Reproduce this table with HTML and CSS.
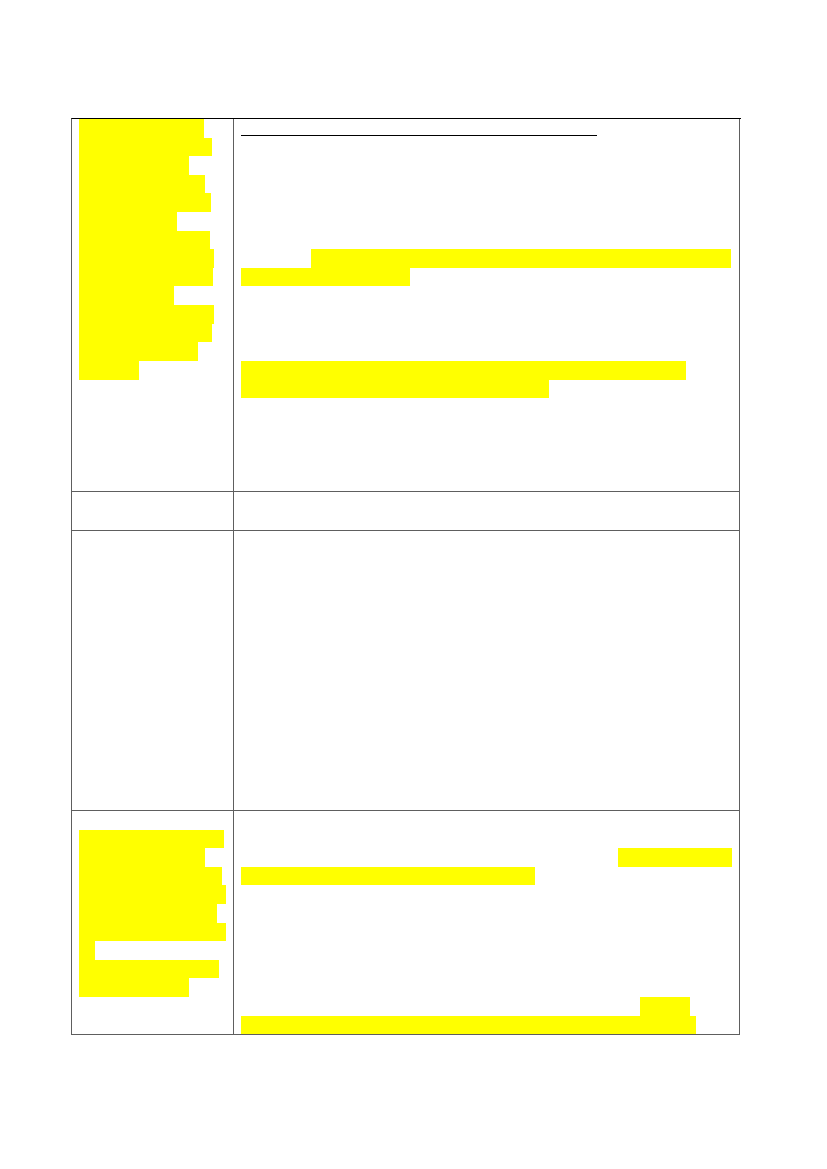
FILE: index.html
```html
<!DOCTYPE html>
<html lang="en">
<head>
<meta charset="utf-8">
<title>Document</title>
<link rel="stylesheet" href="styles.css">
</head>
<body>
<div class="sheet">
  <div class="grid">
    <!-- row 1 -->
    <div class="cell left r1">
      <div class="ln"><span class="hl" style="width:125px"></span></div>
      <div class="ln"><span class="hl" style="width:133px"></span></div>
      <div class="ln"><span class="hl" style="width:110px"></span></div>
      <div class="ln"><span class="hl" style="width:126px"></span></div>
      <div class="ln"><span class="hl" style="width:132px"></span></div>
      <div class="ln"><span class="hl" style="width:98px"></span></div>
      <div class="ln"><span class="hl" style="width:131px"></span></div>
      <div class="ln"><span class="hl" style="width:135px"></span></div>
      <div class="ln"><span class="hl" style="width:134px"></span></div>
      <div class="ln"><span class="hl" style="width:95px"></span></div>
      <div class="ln"><span class="hl" style="width:135px"></span></div>
      <div class="ln"><span class="hl" style="width:133px"></span></div>
      <div class="ln"><span class="hl" style="width:119px"></span></div>
      <div class="ln"><span class="hl" style="width:60px"></span></div>
    </div>
    <div class="cell right r1">
      <div class="ln"><span class="ul" style="width:356px"></span></div>
      <div class="ln"></div>
      <div class="ln"></div>
      <div class="ln"></div>
      <div class="ln"></div>
      <div class="ln"></div>
      <div class="ln"></div>
      <div class="ln"><span class="hl" style="margin-left:70px;width:420px"></span></div>
      <div class="ln"><span class="hl" style="width:169px"></span></div>
      <div class="ln"></div>
      <div class="ln"></div>
      <div class="ln"></div>
      <div class="ln"></div>
      <div class="ln"><span class="hl" style="width:445px"></span></div>
      <div class="ln"><span class="hl" style="width:308px"></span></div>
    </div>

    <!-- row 2 -->
    <div class="cell left r2"></div>
    <div class="cell right r2"></div>

    <!-- row 3 -->
    <div class="cell left r3"></div>
    <div class="cell right r3"></div>

    <!-- row 4 -->
    <div class="cell left r4">
      <div class="ln"></div>
      <div class="ln"><span class="hl" style="width:145px"></span></div>
      <div class="ln"><span class="hl" style="width:126px"></span></div>
      <div class="ln"><span class="hl" style="width:143px"></span></div>
      <div class="ln"><span class="hl" style="width:147px"></span></div>
      <div class="ln"><span class="hl" style="width:138px"></span></div>
      <div class="ln"><span class="hl" style="width:147px"></span></div>
      <div class="ln"><span class="hl" style="width:16px"></span></div>
      <div class="ln"><span class="hl" style="width:140px"></span></div>
      <div class="ln"><span class="hl" style="width:110px"></span></div>
    </div>
    <div class="cell right r4">
      <div class="ln"></div>
      <div class="ln"></div>
      <div class="ln"><span class="hl" style="margin-left:377px;width:114px"></span></div>
      <div class="ln"><span class="hl" style="width:294px"></span></div>
      <div class="ln"></div>
      <div class="ln"></div>
      <div class="ln"></div>
      <div class="ln"></div>
      <div class="ln"></div>
      <div class="ln"></div>
      <div class="ln"><span class="hl" style="margin-left:399px;width:50px"></span></div>
      <div class="ln"><span class="hl" style="width:455px"></span></div>
    </div>
  </div>
</div>
</body>
</html>
```

FILE: styles.css
```css
html, body {
  margin: 0;
  padding: 0;
  background: #ffffff;
  font-family: "Liberation Serif", "Times New Roman", serif;
  font-size: 15.5px;
  color: #000;
}

.sheet {
  padding: 118px 0 0 71px;
}

.grid {
  display: grid;
  grid-template-columns: 162px 506px;
  width: 669px;
  border-left: 1px solid #5e5e5e;
  border-top: 1px solid #000000;
}

.cell {
  border-right: 1px solid #5e5e5e;
  border-bottom: 1px solid #5e5e5e;
  display: flex;
  flex-direction: column;
}

.cell.left {
  padding-left: 6.7px;
}

.cell.right {
  padding-left: 6.7px;
}

.r1 { min-height: calc(20 * 18.62px); }
.r2 { min-height: calc(2 * 18.62px); }
.r3 { min-height: calc(15 * 18.62px); }
.r4 { min-height: calc(12 * 18.62px); }

.ln {
  height: 18.62px;
  display: flex;
  align-items: stretch;
}

.hl {
  display: block;
  background: #ffff00;
}

.ul {
  display: block;
  height: 16px;
  border-bottom: 1px solid #000000;
}
```
